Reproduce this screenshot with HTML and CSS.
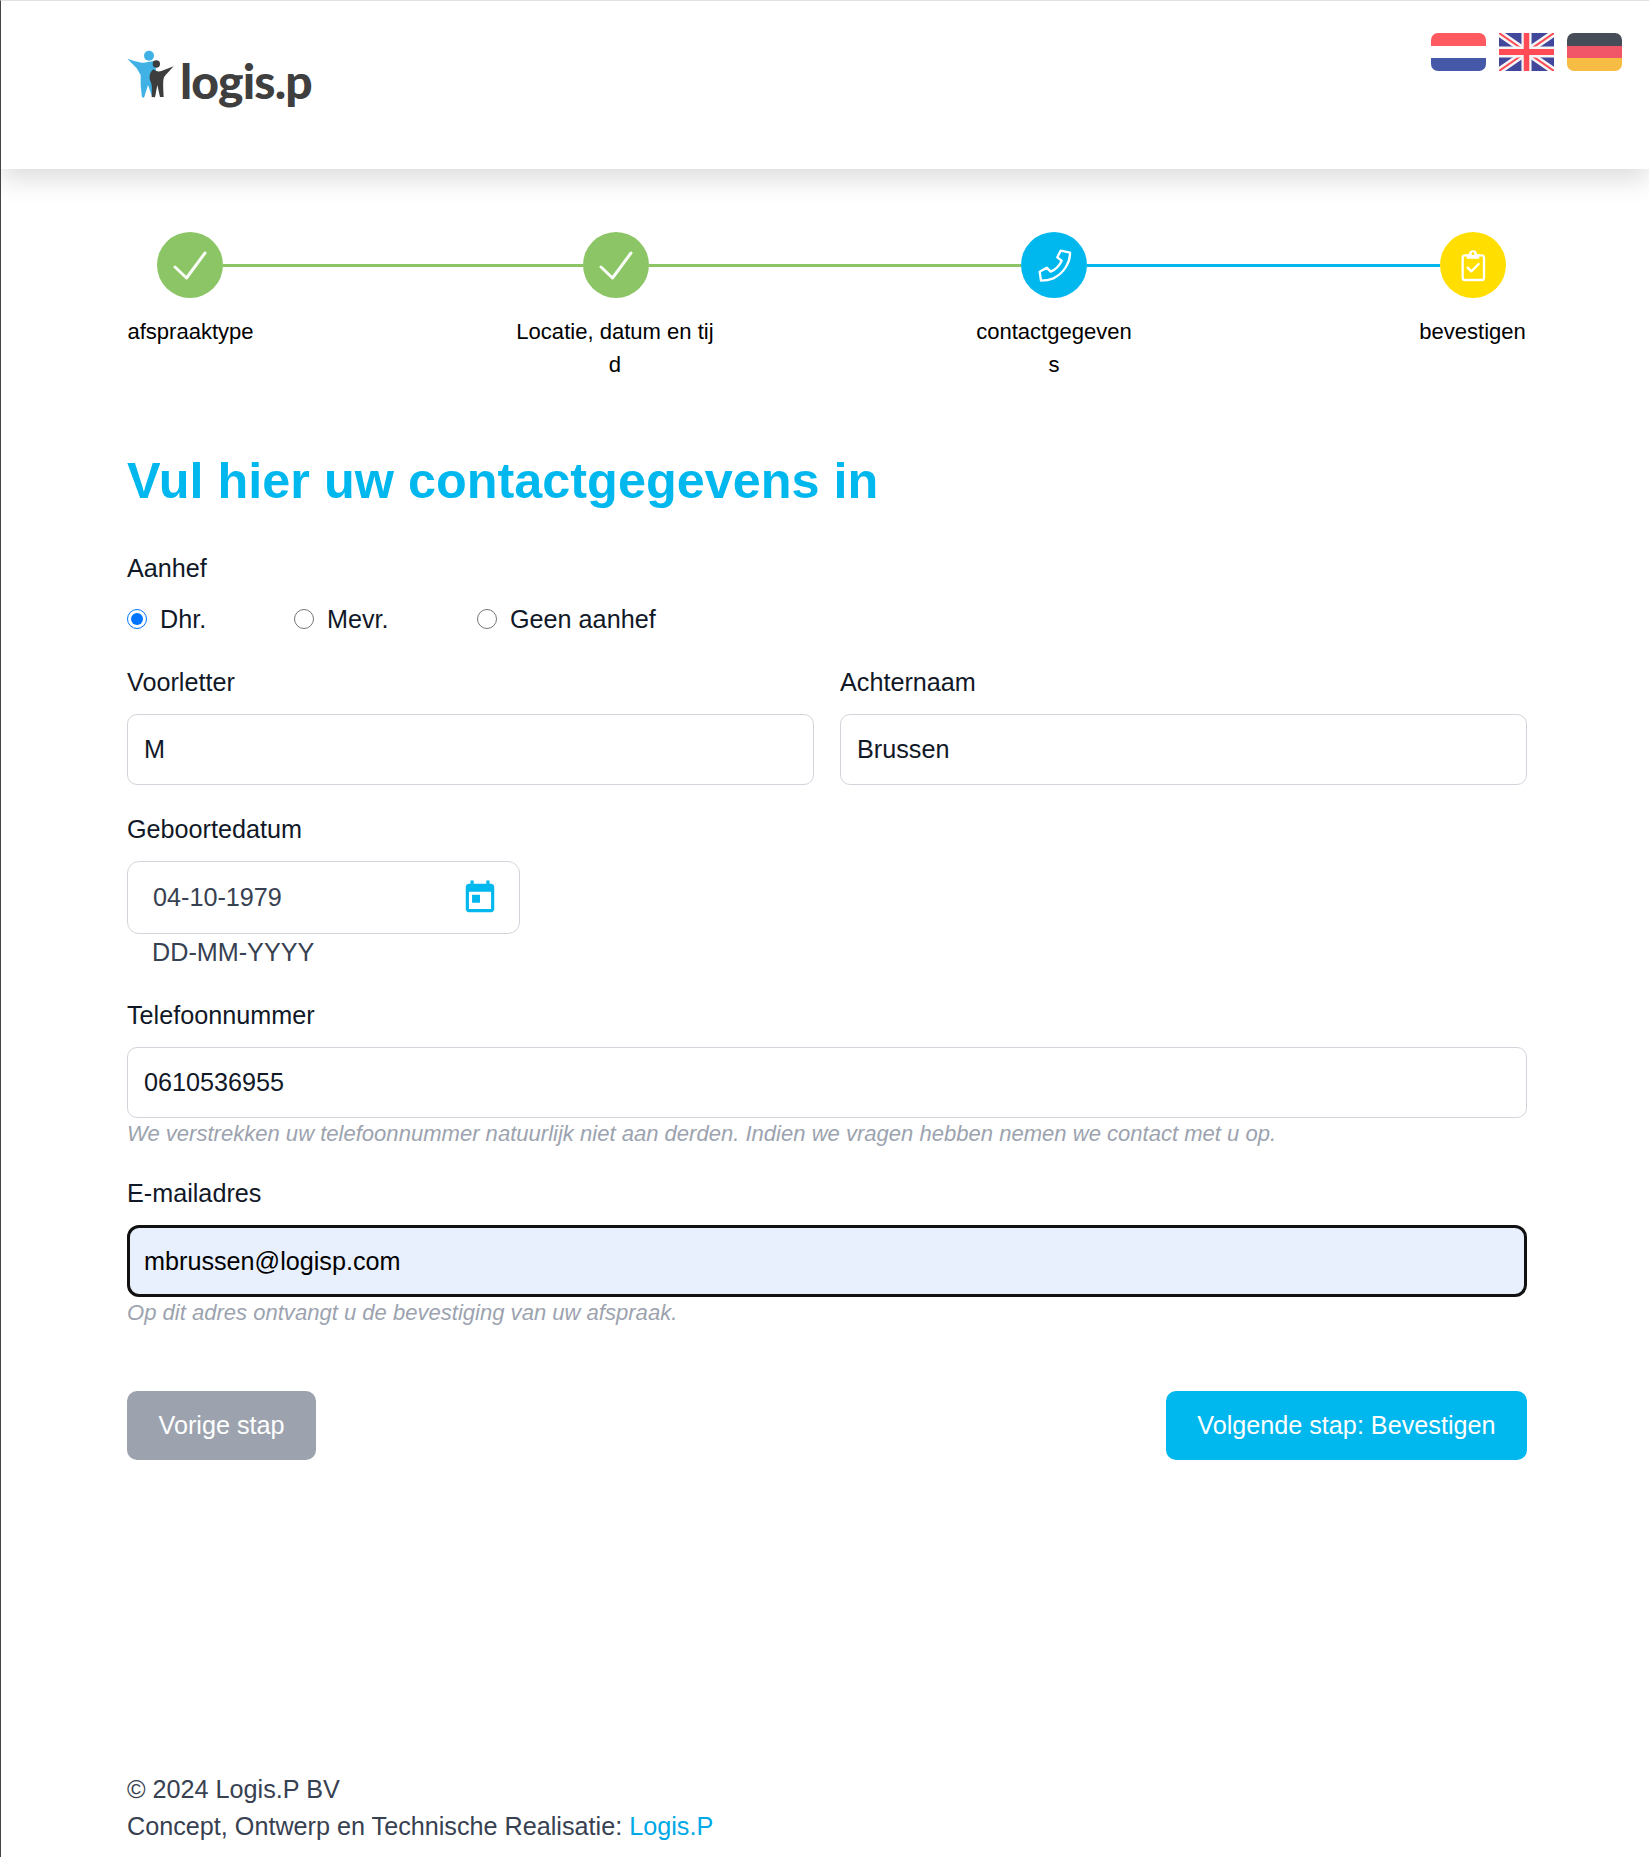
FILE: index.html
```html
<!DOCTYPE html>
<html lang="nl">
<head>
<meta charset="utf-8">
<title>Logis.P - Contactgegevens</title>
<link rel="stylesheet" href="styles.css">
</head>
<body>
<header class="site-header">
  <a class="logo" href="#">
    <svg class="logo-mark" viewBox="0 0 210 210" aria-hidden="true">
      <circle cx="87" cy="47" r="15" fill="#3fb1e5"/>
      <path fill="#3fb1e5" d="M22 56C40 62 60 68 72 68L104 62L112 120L105 170L97 171L84 135L72 173L66 172L62 135L62 105L50 85Z"/>
      <circle cx="109" cy="72" r="11" fill="#3d3d3d"/>
      <path fill="#3d3d3d" d="M100 88C110 96 118 95 126 92L161 79C150 92 138 102 132 112C128 122 130 150 131 171L120 171L112 135L105 172L95 171C96 150 97 135 91 123C86 112 90 94 100 88Z"/>
    </svg>
    <span class="logo-text">logis.p</span>
  </a>
  <nav class="flags" aria-label="Taal">
    <svg class="flag" viewBox="0 0 55 38"><defs><clipPath id="r1"><rect width="55" height="38" rx="7"/></clipPath></defs><g clip-path="url(#r1)"><rect width="55" height="13" fill="#ff5a5f"/><rect y="13" width="55" height="12" fill="#fff"/><rect y="25" width="55" height="13" fill="#4659a8"/></g></svg>
    <svg class="flag" viewBox="0 0 60 38" preserveAspectRatio="none"><rect width="60" height="38" fill="#41479b"/><path d="M0 0L60 38M60 0L0 38" stroke="#f5f5f5" stroke-width="7"/><path d="M0 0L60 38M60 0L0 38" stroke="#ff4b55" stroke-width="2"/><path d="M30 0V38M0 19H60" stroke="#f5f5f5" stroke-width="11"/><path d="M30 0V38M0 19H60" stroke="#ff4b55" stroke-width="6"/></svg>
    <svg class="flag" viewBox="0 0 55 38"><defs><clipPath id="r3"><rect width="55" height="38" rx="7"/></clipPath></defs><g clip-path="url(#r3)"><rect width="55" height="13" fill="#464c58"/><rect y="13" width="55" height="12" fill="#f05668"/><rect y="25" width="55" height="13" fill="#f6bc43"/></g></svg>
  </nav>
</header>

<main class="container">
  <div class="track">
    <span class="dot dot-green"><svg viewBox="0 0 66 66"><path class="check" d="M18 35L29.500 46L48 21"/></svg></span>
    <span class="line line-green line-a"></span>
    <span class="dot dot-green"><svg viewBox="0 0 66 66"><path class="check" d="M18 35L29.500 46L48 21"/></svg></span>
    <span class="line line-green line-b"></span>
    <span class="dot dot-blue"><svg viewBox="3 6 198 198"><path class="outline" d="M122 62L150 68C151 95 134 128 100 145C88 150 76 152 63 152L59 125L80 113L92 125C106 119 119 105 125 92L112 82Z"/></svg></span>
    <span class="line line-blue line-c"></span>
    <span class="dot dot-yellow"><svg viewBox="0 6 198 198"><rect class="outline" x="68" y="76" width="64" height="74" rx="7"/><path fill="#fff" d="M80 73H87a12 12 0 0 1 24 0H118V86H80Z"/><circle cx="99" cy="71" r="4" fill="#ffde00"/><path class="outline" d="M83 113L94 124L116 102"/></svg></span>
  </div>
  <div class="step-labels">
    <span class="step-label sl-a">afspraaktype</span>
    <span class="step-label sl-b">Locatie, datum en tijd</span>
    <span class="step-label sl-c">contactgegevens</span>
    <span class="step-label sl-d">bevestigen</span>
  </div>

  <h1 class="title">Vul hier uw contactgegevens in</h1>

  <form class="form">
    <div class="field-label">Aanhef</div>
    <div class="radios">
      <label class="radio radio-a"><input type="radio" name="aanhef" checked>Dhr.</label>
      <label class="radio radio-b"><input type="radio" name="aanhef">Mevr.</label>
      <label class="radio"><input type="radio" name="aanhef">Geen aanhef</label>
    </div>

    <div class="name-row">
      <div class="col">
        <label class="field-label">Voorletter</label>
        <input class="input" type="text" value="M">
      </div>
      <div class="col">
        <label class="field-label">Achternaam</label>
        <input class="input" type="text" value="Brussen">
      </div>
    </div>

    <label class="field-label label-gap">Geboortedatum</label>
    <div class="date-box">
      <span class="date-value">04-10-1979</span>
      <svg class="calendar" viewBox="0 0 24 24"><path fill="#00b8ee" d="M19 3h-1V1h-2v2H8V1H6v2H5c-1.110 0-1.990.9-1.990 2L3 19c0 1.100.89 2 2 2h14c1.100 0 2-.9 2-2V5c0-1.100-.9-2-2-2zm0 16H5V8h14v11zM7 10h5v5H7z"/></svg>
    </div>
    <div class="date-format">DD-MM-YYYY</div>

    <label class="field-label label-gap-phone">Telefoonnummer</label>
    <input class="input" type="text" value="0610536955">
    <p class="hint">We verstrekken uw telefoonnummer natuurlijk niet aan derden. Indien we vragen hebben nemen we contact met u op.</p>

    <label class="field-label label-gap">E-mailadres</label>
    <input class="input input-focus" type="text" value="mbrussen@logisp.com">
    <p class="hint">Op dit adres ontvangt u de bevestiging van uw afspraak.</p>

    <div class="actions">
      <button class="btn btn-grey" type="button">Vorige stap</button>
      <button class="btn btn-blue" type="button">Volgende stap: Bevestigen</button>
    </div>
  </form>
</main>

<footer class="footer">
  <div>© 2024 Logis.P BV</div>
  <div>Concept, Ontwerp en Technische Realisatie: <a href="#">Logis.P</a></div>
</footer>
</body>
</html>
```

FILE: styles.css
```css
* { box-sizing: border-box; }
html, body { margin: 0; padding: 0; }
body {
  height: 1857px;
  display: flex;
  flex-direction: column;
  font-family: "Liberation Sans", Arial, sans-serif;
  color: #111827;
  background: #fff;
  border-top: 1px solid #e2e2e2;
  border-left: 1px solid #444;
  overflow: hidden;
}
.site-header {
  height: 168px;
  flex: none;
  display: flex;
  justify-content: space-between;
  align-items: flex-start;
  padding: 32px 27px 0 119px;
  background: #fff;
  box-shadow: 0 10px 25px rgba(0,0,0,.14);
}
.logo {
  display: flex;
  align-items: flex-start;
  text-decoration: none;
  margin-top: 7px;
}
.logo-mark { width: 70px; height: 70px; margin-right: -16px; }
.logo-text {
  font-family: Lato, sans-serif;
  font-weight: 900;
  font-size: 48px;
  line-height: 60px;
  letter-spacing: -0.850px;
  color: #3f3f3f;
  margin-top: 11px;
  margin-left: 6px;
}
.flags { display: flex; gap: 13px; }
.flag { width: 55px; height: 38px; display: block; }

.container { width: 1400px; margin-left: 126px; flex: none; }
.track {
  display: flex;
  align-items: center;
  padding-left: 30px;
  margin-top: 63px;
}
.dot {
  width: 66px;
  height: 66px;
  border-radius: 50%;
  flex: none;
  display: flex;
  align-items: center;
  justify-content: center;
}
.dot svg { display: block; width: 66px; height: 66px; }
.dot-green { background: #8bc565; }
.dot-blue { background: #00b8ee; }
.dot-yellow { background: #ffde00; }
.check { fill: none; stroke: #fff; stroke-width: 3; stroke-linecap: round; stroke-linejoin: round; opacity: .95; }
.outline { fill: none; stroke: #fff; stroke-width: 7; stroke-linejoin: round; stroke-linecap: round; }
.line { height: 3px; flex: none; }
.line-green { background: #8bc565; }
.line-blue { background: #00b8ee; }
.line-a { width: 360px; }
.line-b { width: 372px; }
.line-c { width: 353px; }

.step-labels { display: flex; margin-top: 18px; }
.step-label {
  display: block;
  font-size: 22.050px;
  line-height: 32.500px;
  text-align: center;
  word-break: break-all;
  color: #000;
  flex: none;
}
.sl-a { width: 127px; }
.sl-b { width: 200px; margin-left: 261px; }
.sl-c { width: 160px; margin-left: 259px; }
.sl-d { width: 107px; margin-left: 285px; }

.title {
  margin: 70px 0 0;
  font-size: 50.400px;
  line-height: 60px;
  font-weight: 700;
  color: #00b8ee;
}
.form { display: block; margin-top: 42px; }
.field-label {
  display: block;
  font-size: 25.200px;
  line-height: 30px;
  margin-bottom: 17px;
  color: #111827;
}
.label-gap { margin-top: 29px; }
.label-gap-phone { margin-top: 33px; }
.form > .field-label:first-child { margin-bottom: 0; }
.radios { display: flex; height: 30px; margin-top: 21px; margin-bottom: 33px; font-size: 25.200px; }
.radio { display: flex; align-items: center; line-height: 30px; }
.radio input { width: 20px; height: 20px; margin: 0 13px 0 0; flex: none; }
.radio-a { width: 167px; }
.radio-b { width: 183px; }
.name-row { display: grid; grid-template-columns: 687px 687px; gap: 26px; }
.input {
  display: block;
  width: 100%;
  height: 71px;
  padding: 0 16px;
  font: 25.200px "Liberation Sans", Arial, sans-serif;
  color: #111827;
  background: #fff;
  border: 1px solid #d1d5db;
  border-radius: 10px;
  outline: none;
}
.input-focus {
  height: 72px;
  background: #e8f0fe;
  border: 3px solid #111;
  border-radius: 12px;
  padding: 0 14px;
  color: #000;
}
.date-box {
  width: 393px;
  height: 73px;
  display: flex;
  align-items: center;
  justify-content: space-between;
  padding: 0 20px 0 25px;
  border: 1px solid #d1d5db;
  border-radius: 12px;
}
.date-value { font-size: 25.200px; color: #374151; }
.calendar { width: 38px; height: 38px; display: block; }
.date-format {
  margin: 3px 0 0 25px;
  font-size: 25.200px;
  line-height: 30px;
  color: #374151;
}
.hint {
  margin: 1px 0 0;
  font-size: 22.050px;
  line-height: 30px;
  font-style: italic;
  color: #9ca3af;
}
.actions { display: flex; justify-content: space-between; margin-top: 63px; }
.btn {
  height: 69px;
  border: 0;
  border-radius: 10px;
  padding: 0 31.500px;
  font: 25.200px "Liberation Sans", Arial, sans-serif;
  color: #fff;
}
.btn-grey { background: #9ca3af; }
.btn-blue { background: #00b8ee; }
.footer {
  margin-top: auto;
  margin-left: 126px;
  padding-bottom: 12px;
  font-size: 25.200px;
  line-height: 37px;
  color: #374151;
}
.footer a { color: #00a9e6; text-decoration: none; }
```
